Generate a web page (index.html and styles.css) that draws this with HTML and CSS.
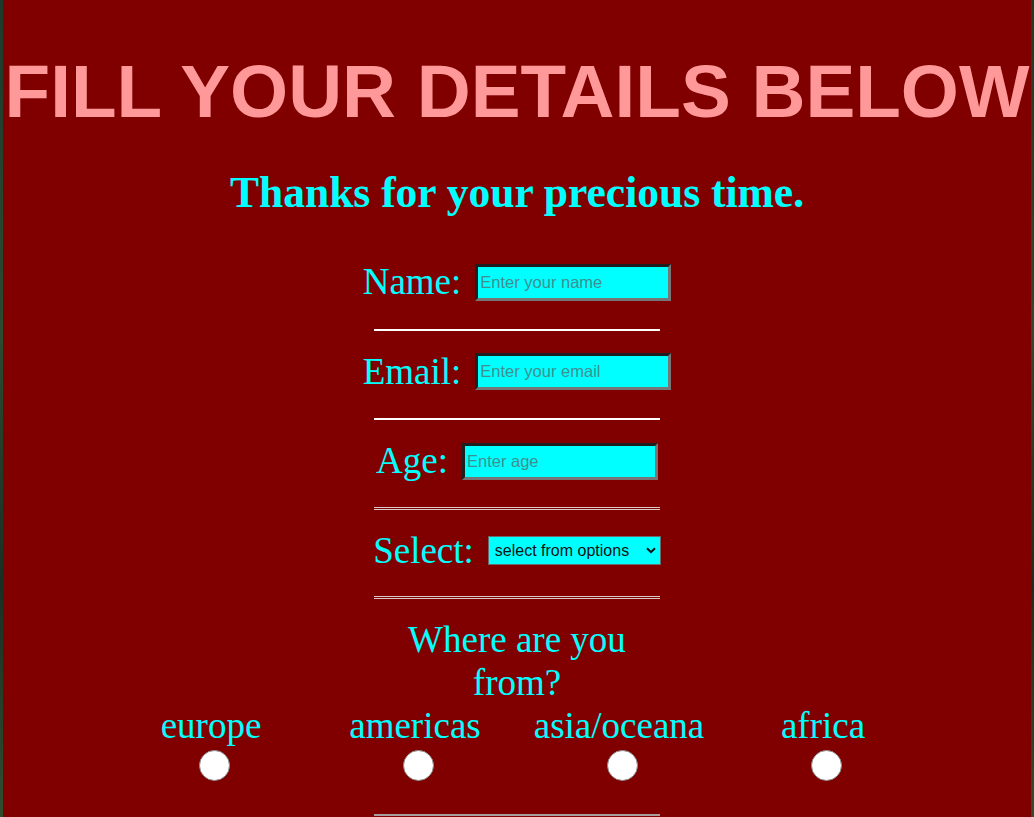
FILE: index.html
```html
<!DOCTYPE html>
<html lang="en">
<head>
<meta charset="utf-8">
<title>Fill your details</title>
<link rel="stylesheet" href="styles.css">
</head>
<body>
<div class="page">
  <h1 class="title">FILL YOUR DETAILS BELOW</h1>
  <h2 class="subtitle">Thanks for your precious time.</h2>
  <form class="form">
    <div class="field">
      <label class="label" for="name">Name:</label>
      <input class="text-input" id="name" type="text" placeholder="Enter your name">
    </div>
    <hr class="rule rule-white">
    <div class="field">
      <label class="label" for="email">Email:</label>
      <input class="text-input" id="email" type="email" placeholder="Enter your email">
    </div>
    <hr class="rule rule-white">
    <div class="field">
      <label class="label" for="age">Age:</label>
      <input class="text-input" id="age" type="text" placeholder="Enter age">
    </div>
    <hr class="rule rule-grey">
    <div class="field">
      <label class="label" for="sel">Select:</label>
      <span class="select-wrap">
        <select class="select" id="sel">
          <option>select from options</option>
        </select>
        <svg class="chevron" width="10" height="7" viewBox="0 0 10 7" aria-hidden="true">
          <path d="M1 1.2 L5 5.2 L9 1.2" fill="none" stroke="#111" stroke-width="2"/>
        </svg>
      </span>
    </div>
    <hr class="rule rule-grey">
    <p class="question">Where are you from?</p>
    <div class="regions">
      <label class="region"><span class="region-name">europe</span><input class="radio" type="radio" name="region"></label>
      <label class="region"><span class="region-name">americas</span><input class="radio" type="radio" name="region"></label>
      <label class="region"><span class="region-name">asia/oceana</span><input class="radio" type="radio" name="region"></label>
      <label class="region"><span class="region-name">africa</span><input class="radio" type="radio" name="region"></label>
    </div>
    <hr class="rule rule-last">
  </form>
</div>
</body>
</html>
```

FILE: styles.css
```css
html, body {
  margin: 0;
  padding: 0;
}

body {
  background: linear-gradient(180deg, #1d3a2c 0%, #2c4a30 40%, #1a2f24 70%, #33502f 100%);
  font-family: "Liberation Serif", "Times New Roman", serif;
  min-height: 100vh;
}

.page {
  margin: 0 3px;
  background: #800000;
  min-height: 100vh;
  padding-top: 49px;
  box-sizing: border-box;
  overflow: hidden;
}

.title {
  margin: 0;
  font-family: "Liberation Sans", Arial, sans-serif;
  font-weight: bold;
  font-size: 74.7px;
  line-height: 85px;
  color: #ff9999;
  text-align: center;
  white-space: nowrap;
}

.subtitle {
  margin: 33px 0 0;
  font-family: "Liberation Serif", "Times New Roman", serif;
  font-weight: bold;
  font-size: 43.5px;
  line-height: 50px;
  color: #00ffff;
  text-align: center;
}

.form {
  margin-top: 44px;
  display: flex;
  flex-direction: column;
  align-items: center;
}

.field {
  display: flex;
  align-items: center;
  justify-content: center;
  gap: 14px;
  height: 42.5px;
}

.label {
  font-size: 37px;
  line-height: 42.5px;
  color: #00ffff;
}

.text-input {
  width: 196px;
  height: 37px;
  box-sizing: border-box;
  border-style: solid;
  border-width: 3px;
  border-color: #1e1e1e #767676 #767676 #1e1e1e;
  background: #00ffff;
  padding: 1px 2px;
  font-family: "Liberation Sans", Arial, sans-serif;
  font-size: 16.5px;
  color: #000;
  outline: none;
}

.text-input::placeholder {
  color: #3f8f8f;
}

.select-wrap {
  position: relative;
  display: inline-flex;
}

.select {
  -webkit-appearance: none;
  appearance: none;
  width: 173px;
  height: 29px;
  box-sizing: border-box;
  background-color: #00ffff;
  border: 1px solid #6a6a6a;
  border-radius: 0;
  font-family: "Liberation Sans", Arial, sans-serif;
  font-size: 16px;
  color: #111;
  padding: 0 20px 0 6px;
  margin: 0;
}

.chevron {
  position: absolute;
  right: 5px;
  top: 11px;
  pointer-events: none;
}

.rule {
  width: 286px;
  height: 2px;
  box-sizing: border-box;
  margin: 25px 0 20px;
  border: 0;
}

.rule-white {
  background: #ffffff;
}

.rule-grey {
  border-top: 1px solid #d8c8c8;
  border-bottom: 1px solid #d8c8c8;
  height: 3px;
  margin: 24px 0 20px;
}

.rule-last {
  background: #a8a0a0;
  margin: 33px 0 20px;
}

.question {
  width: 286px;
  margin: 0;
  font-size: 37px;
  line-height: 42.5px;
  color: #00ffff;
  text-align: center;
}

.regions {
  width: 816px;
  display: grid;
  grid-template-columns: repeat(4, 1fr);
  flex-shrink: 0;
  margin-top: 1px;
}

.region {
  display: flex;
  flex-direction: column;
  align-items: center;
}

.region-name {
  font-size: 37px;
  line-height: 42.5px;
  color: #00ffff;
}

.radio {
  -webkit-appearance: none;
  appearance: none;
  width: 31px;
  height: 31px;
  margin: 2px 0 0 7px;
  border-radius: 50%;
  background: #ffffff;
  border: 1px solid #8a8a8a;
  box-sizing: border-box;
}
```
